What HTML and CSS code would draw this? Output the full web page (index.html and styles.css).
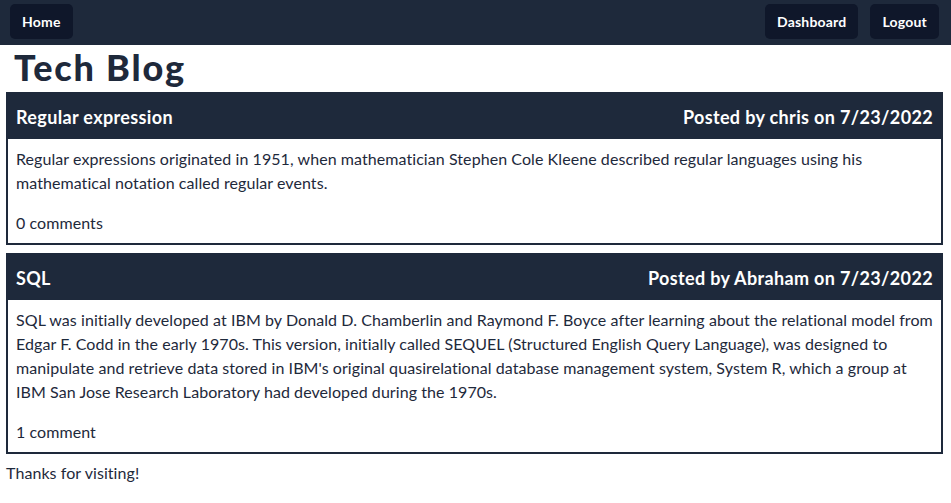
FILE: index.html
```html
<!DOCTYPE html>
<html lang="en">
<head>
<meta charset="utf-8">
<title>Tech Blog</title>
<link rel="stylesheet" href="styles.css">
</head>
<body>
<nav class="nav">
  <a class="btn" href="#">Home</a>
  <div class="nav-right">
    <a class="btn" href="#">Dashboard</a>
    <a class="btn" href="#">Logout</a>
  </div>
</nav>
<h1 class="title">Tech Blog</h1>
<main class="posts">
  <article class="card">
    <header class="card-head">
      <h2 class="card-title">Regular expression</h2>
      <span class="card-meta">Posted by chris on 7/23/2022</span>
    </header>
    <div class="card-body">
      <p class="card-text">Regular expressions originated in 1951, when mathematician Stephen Cole Kleene described regular languages using his mathematical notation called regular events.</p>
      <p class="card-comments">0 comments</p>
    </div>
  </article>
  <article class="card">
    <header class="card-head">
      <h2 class="card-title">SQL</h2>
      <span class="card-meta">Posted by Abraham on 7/23/2022</span>
    </header>
    <div class="card-body">
      <p class="card-text">SQL was initially developed at IBM by Donald D. Chamberlin and Raymond F. Boyce after learning about the relational model from Edgar F. Codd in the early 1970s. This version, initially called SEQUEL (Structured English Query Language), was designed to manipulate and retrieve data stored in IBM's original quasirelational database management system, System R, which a group at IBM San Jose Research Laboratory had developed during the 1970s.</p>
      <p class="card-comments">1 comment</p>
    </div>
  </article>
</main>
<footer class="footer">Thanks for visiting!</footer>
</body>
</html>
```
FILE: styles.css
```css
* { box-sizing: border-box; }
html, body { margin: 0; padding: 0; }
body {
  font-family: Lato, "Liberation Sans", sans-serif;
  font-size: 16px;
  line-height: 24px;
  color: #1e293b;
  background: #ffffff;
  letter-spacing: 0.07px;
}
.nav {
  display: flex;
  justify-content: space-between;
  align-items: flex-start;
  height: 45px;
  padding: 4px 12px 0 10px;
  background: #1e293b;
}
.nav-right { display: flex; gap: 12px; }
.btn {
  display: block;
  height: 35px;
  padding: 0 12px;
  border-radius: 5px;
  background: #0f172a;
  color: #ffffff;
  font-size: 14px;
  font-weight: 700;
  line-height: 35px;
  letter-spacing: 0.2px;
  text-decoration: none;
}
.title {
  margin: 2px 0 5px;
  padding-left: 14px;
  font-size: 36px;
  line-height: 40px;
  font-weight: 900;
  letter-spacing: 1.8px;
}
.posts {
  display: flex;
  flex-direction: column;
  gap: 8px;
  margin: 0 8px 0 6px;
}
.card { border: 2px solid #1e293b; }
.card-head {
  display: flex;
  justify-content: space-between;
  align-items: center;
  padding: 9px 8px 8px;
  background: #1e293b;
  color: #ffffff;
  font-size: 18px;
  line-height: 28px;
  font-weight: 700;
  letter-spacing: 0.35px;
}
.card-title { margin: 0; font-size: 18px; font-weight: 700; }
.card-body { padding: 8px; }
.card-text { margin: 0 0 16px; }
.card-comments { margin: 0; }
.footer { margin-top: 7px; padding-left: 6px; }
```
